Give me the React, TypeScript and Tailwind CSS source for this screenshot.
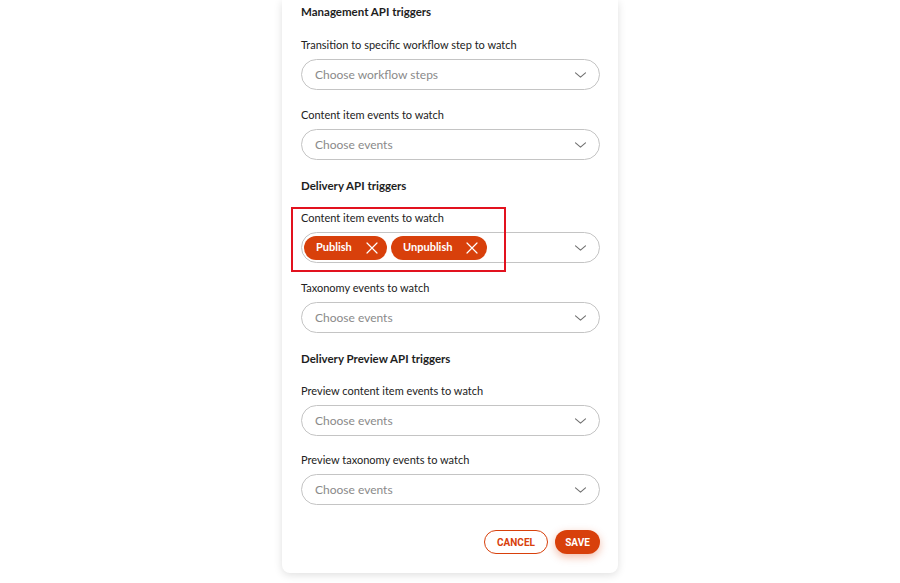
import React from "react";

const font = { fontFamily: "Lato, Inter, 'Noto Sans', sans-serif" };

function Chevron() {
  return (
    <svg width="13" height="8" viewBox="0 0 13 8" fill="none" className="shrink-0">
      <path d="M1.5 1.8 L6.5 6.2 L11.5 1.8" stroke="#707070" strokeWidth="1.1" strokeLinecap="round" strokeLinejoin="round" />
    </svg>
  );
}

function XIcon() {
  return (
    <svg width="12" height="12" viewBox="0 0 12 12" fill="none" className="shrink-0">
      <path d="M1 1 L11 11 M11 1 L1 11" stroke="#fff" strokeWidth="1.2" strokeLinecap="round" />
    </svg>
  );
}

function Select({ placeholder }: { placeholder: string }) {
  return (
    <div className="flex h-[31px] items-center justify-between rounded-full border border-[#c4c4c4] bg-white pl-[13px] pr-[12px]">
      <span className="text-[12px] leading-[14px] text-[#8a8a8a]">{placeholder}</span>
      <Chevron />
    </div>
  );
}

function Chip({ label, width }: { label: string; width: string }) {
  return (
    <div className={`flex h-[24px] items-center justify-between rounded-full bg-[#d8400b] pl-[12px] pr-[9px] ${width}`}>
      <span className="text-[11px] font-bold text-white">{label}</span>
      <XIcon />
    </div>
  );
}

function Label({ children }: { children: React.ReactNode }) {
  return <div className="mb-[7px] text-[11px] leading-[14px] text-[#222]">{children}</div>;
}

function Heading({ children, className = "" }: { children: React.ReactNode; className?: string }) {
  return <div className={`text-[11.5px] font-bold leading-[14px] text-[#1e1e1e] ${className}`}>{children}</div>;
}

function Field({ label, placeholder, className = "" }: { label: string; placeholder: string; className?: string }) {
  return (
    <div className={className}>
      <Label>{label}</Label>
      <Select placeholder={placeholder} />
    </div>
  );
}

export default function App() {
  return (
    <div className="min-h-[583px] w-full bg-white" style={font}>
      <div className="mx-auto w-[336px] rounded-b-[8px] bg-white pb-[19px] pl-[19px] pr-[18px] pt-[5px] shadow-[0_2px_8px_rgba(0,0,0,0.13)]">
        <Heading>Management API triggers</Heading>
        <Field className="mt-[19px]" label="Transition to specific workflow step to watch" placeholder="Choose workflow steps" />
        <Field className="mt-[18px]" label="Content item events to watch" placeholder="Choose events" />

        <Heading className="mt-[19px]">Delivery API triggers</Heading>
        <div className="relative mt-[18px]">
          <Label>Content item events to watch</Label>
          <div className="flex h-[31px] items-center justify-between rounded-full border border-[#c4c4c4] bg-white pl-[2px] pr-[12px]">
            <div className="flex items-center gap-[4px]">
              <Chip label="Publish" width="w-[83px]" />
              <Chip label="Unpublish" width="w-[96px]" />
            </div>
            <Chevron />
          </div>
          <div className="pointer-events-none absolute left-[-10px] top-[-4px] h-[65px] w-[215px] border-2 border-[#e2121f]" />
        </div>
        <Field className="mt-[18px]" label="Taxonomy events to watch" placeholder="Choose events" />

        <Heading className="mt-[19px]">Delivery Preview API triggers</Heading>
        <Field className="mt-[18px]" label="Preview content item events to watch" placeholder="Choose events" />
        <Field className="mt-[17px]" label="Preview taxonomy events to watch" placeholder="Choose events" />

        <div className="mt-[25px] flex justify-end gap-[7px]" style={{ fontFamily: "Roboto, 'Liberation Sans', sans-serif" }}>
          <button className="flex h-[24px] w-[64px] items-center justify-center rounded-full border border-[#d8400b] bg-white text-[10px] font-bold text-[#d8400b]">
            CANCEL
          </button>
          <button className="flex h-[24px] w-[45px] items-center justify-center rounded-full bg-[#d8400b] text-[10px] font-bold text-white shadow-[0_3px_8px_rgba(216,64,11,0.35)]">
            SAVE
          </button>
        </div>
      </div>
    </div>
  );
}
